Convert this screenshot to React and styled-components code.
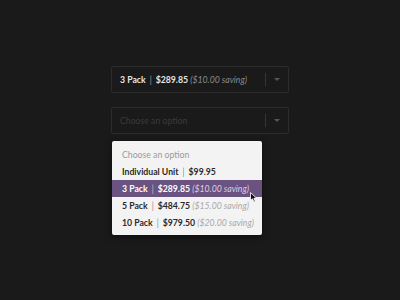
import styled, { createGlobalStyle } from "styled-components";

const Global = createGlobalStyle`
  html, body {
    margin: 0;
    background: #1a1a1a;
  }
  body {
    font-family: Lato, "Open Sans", sans-serif;
  }
`;

const options = [
  { label: "Individual Unit", price: "$99.95" },
  { label: "3 Pack", price: "$289.85", saving: "($10.00 saving)", active: true },
  { label: "5 Pack", price: "$484.75", saving: "($15.00 saving)" },
  { label: "10 Pack", price: "$979.50", saving: "($20.00 saving)" },
];

const Page = styled.div`
  width: 400px;
  height: 300px;
  box-sizing: border-box;
  padding: 66px 0 0 111px;
  display: flex;
  flex-direction: column;
`;

const Select = styled.div`
  position: relative;
  width: 178px;
  height: 27px;
  box-sizing: border-box;
  border: 1px solid #2c2c2c;
  border-radius: 2px;
  display: flex;
  align-items: center;
  margin-bottom: ${(p) => p.$gap || 0}px;
`;

const Value = styled.div`
  flex: 1;
  padding-left: 8px;
  font-size: 8.7px;
  color: ${(p) => (p.$placeholder ? "#3b3b3b" : "#e6e6e6")};
  white-space: nowrap;
`;

const Caret = styled.div`
  width: 22px;
  height: 13px;
  border-left: 1px solid #353535;
  display: flex;
  align-items: center;
  justify-content: center;
  &::after {
    content: "";
    border-left: 3px solid transparent;
    border-right: 3px solid transparent;
    border-top: 3px solid #555;
  }
`;

const Bold = styled.b`
  font-weight: 700;
`;

const Sep = styled.span`
  margin: 0 4px;
  font-weight: 300;
`;

const Saving = styled.i`
  font-weight: 400;
  color: ${(p) => p.$color};
`;

const Menu = styled.div`
  position: absolute;
  top: 33px;
  left: 0;
  width: 150px;
  box-sizing: border-box;
  background: #f3f3f4;
  border-radius: 2px;
  padding: 5px 0 4px;
  box-shadow: 0 2px 6px rgba(0, 0, 0, 0.5);
`;

const Row = styled.div`
  height: 17px;
  display: flex;
  align-items: center;
  padding-left: 10px;
  font-size: 8.7px;
  white-space: nowrap;
  background: ${(p) => (p.$active ? "#6a5281" : "transparent")};
  color: ${(p) => (p.$active ? "#ffffff" : p.$placeholder ? "#9a9a9a" : "#2a2a2a")};
`;

const Cursor = styled.svg`
  position: absolute;
  left: 138px;
  top: 51px;
`;

export default function App() {
  return (
    <>
      <Global />
      <Page>
        <Select $gap={14}>
          <Value>
            <Bold>3 Pack</Bold>
            <Sep>|</Sep>
            <Bold>$289.85</Bold> <Saving $color="#8a8a8a">($10.00 saving)</Saving>
          </Value>
          <Caret />
        </Select>
        <Select>
          <Value $placeholder>Choose an option</Value>
          <Caret />
          <Menu>
            <Row $placeholder>Choose an option</Row>
            {options.map((o) => (
              <Row key={o.label} $active={o.active}>
                <Bold>{o.label}</Bold>
                <Sep>|</Sep>
                <Bold>{o.price}</Bold>
                {o.saving && (
                  <>
                    &nbsp;
                    <Saving $color={o.active ? "#d9cfe3" : "#a8a8a8"}>{o.saving}</Saving>
                  </>
                )}
              </Row>
            ))}
            <Cursor width="8" height="11" viewBox="0 0 8 11">
              <path d="M0.5 0.5 L0.5 8.5 L2.5 6.8 L4 10 L5.3 9.4 L3.9 6.3 L6.6 6.3 Z" fill="#111" stroke="#fff" strokeWidth="0.8" />
            </Cursor>
          </Menu>
        </Select>
      </Page>
    </>
  );
}
